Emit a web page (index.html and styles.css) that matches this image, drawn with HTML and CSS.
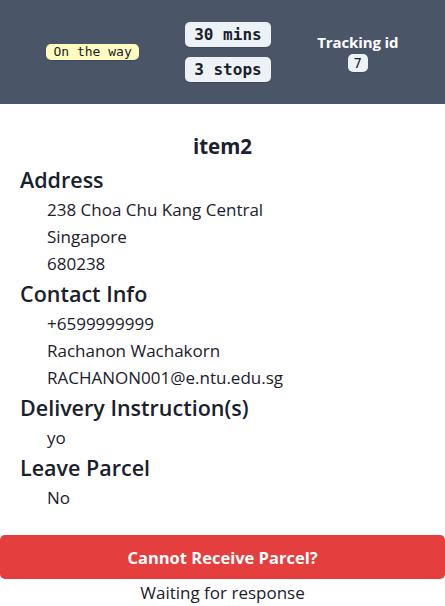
FILE: index.html
```html
<!DOCTYPE html>
<html>
<head>
<meta charset="utf-8">
<link rel="stylesheet" href="styles.css">
</head>
<body>
<header class="topbar">
  <span class="badge badge-yellow">On the way</span>
  <div class="stack">
    <span class="badge badge-big">30 mins</span>
    <span class="badge badge-big">3 stops</span>
  </div>
  <div class="tracking">
    <div class="tracking-label">Tracking id</div>
    <span class="badge badge-id">7</span>
  </div>
</header>
<main class="content">
  <h1 class="title">item2</h1>
  <h2 class="section">Address</h2>
  <div class="lines">
    <div>238 Choa Chu Kang Central</div>
    <div>Singapore</div>
    <div>680238</div>
  </div>
  <h2 class="section">Contact Info</h2>
  <div class="lines">
    <div>+6599999999</div>
    <div>Rachanon Wachakorn</div>
    <div>RACHANON001@e.ntu.edu.sg</div>
  </div>
  <h2 class="section">Delivery Instruction(s)</h2>
  <div class="lines">
    <div>yo</div>
  </div>
  <h2 class="section">Leave Parcel</h2>
  <div class="lines">
    <div>No</div>
  </div>
</main>
<div class="actions">
  <button class="btn-red">Cannot Receive Parcel?</button>
  <div class="status">Waiting for response</div>
</div>
</body>
</html>
```

FILE: styles.css
```css
* { box-sizing: border-box; }
html, body { margin: 0; padding: 0; }
body {
  font-family: "Open Sans", "Noto Sans", sans-serif;
  color: #1a202c;
  background: #fff;
  width: 445px;
}
.topbar {
  height: 104px;
  background: #4a5568;
  display: flex;
  align-items: center;
  justify-content: space-evenly;
}
.badge {
  display: inline-block;
  font-family: "DejaVu Sans Mono", monospace;
  border-radius: 5px;
  background: #edf2f7;
  color: #1a202c;
  box-shadow: 0 1px 1px rgba(0,0,0,0.15);
}
.badge-yellow {
  background: #fefcbf;
  font-size: 13px;
  line-height: 16px;
  padding: 0 7px;
}
.stack {
  display: flex;
  flex-direction: column;
  gap: 10px;
}
.badge-big {
  font-size: 16px;
  font-weight: bold;
  line-height: 25px;
  padding: 0 9px;
}
.tracking {
  display: flex;
  flex-direction: column;
  align-items: center;
  gap: 2px;
}
.tracking-label {
  color: #fff;
  font-weight: bold;
  font-size: 15px;
  line-height: 19px;
  letter-spacing: -0.1px;
}
.badge-id {
  font-size: 14px;
  line-height: 18px;
  padding: 0 6px;
}
.content {
  padding: 26px 20px 0 20px;
}
.title {
  margin: 0;
  text-align: center;
  font-size: 20.5px;
  line-height: 33px;
  font-weight: 700;
}
.section {
  margin: 0;
  font-size: 21.5px;
  line-height: 33px;
  font-weight: 600;
}
.lines {
  padding-left: 27px;
  font-size: 17px;
  line-height: 27px;
}
.actions {
  margin-top: 24px;
  display: flex;
  flex-direction: column;
  align-items: stretch;
}
.btn-red {
  height: 44px;
  border: none;
  border-radius: 5px;
  background: #e53e3e;
  color: #fff;
  font-family: inherit;
  font-weight: 700;
  font-size: 16.5px;
  width: 100%;
}
.status {
  text-align: center;
  font-size: 17px;
  line-height: 28px;
}
```
